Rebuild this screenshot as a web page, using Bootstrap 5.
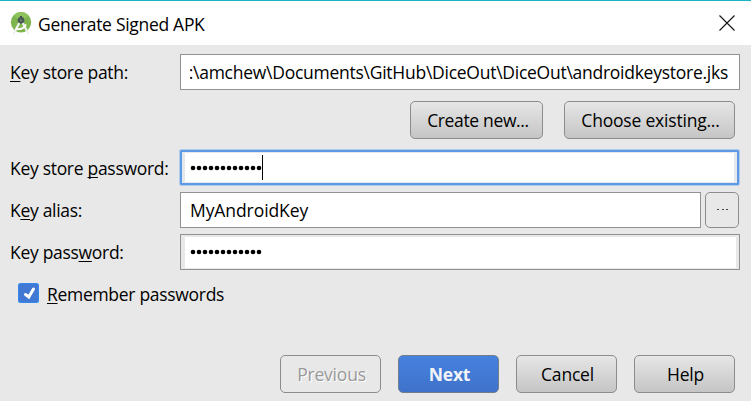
<!DOCTYPE html>
<html lang="en">
<head>
<meta charset="utf-8">
<meta name="viewport" content="width=device-width, initial-scale=1">
<title>Generate Signed APK</title>
<link href="https://cdn.jsdelivr.net/npm/bootstrap@5.3.0/dist/css/bootstrap.min.css" rel="stylesheet">
<style>
body{font-family:"Open Sans","Noto Sans",sans-serif;font-size:17.5px;line-height:24px;color:#000;background:#e8e8e8;width:751px;height:401px;overflow:hidden;letter-spacing:-.3px}
.titlebar{height:45px;border-top:1px solid #1bb4c2;padding:0 16px 0 10px}
.app-icon{width:22px;height:24px;margin-right:6px;margin-top:-1px}
.title-text{padding-top:2px}
.close-icon{margin-top:-1px}
u{text-decoration-thickness:1px;text-underline-offset:2px;text-decoration-skip-ink:none}
.form-area{padding:9px 11px 8px 10px;height:356px}
.field-label{width:170px;flex:none;white-space:nowrap}
.field-row{height:36px}
.alias-row,.key-row{margin-top:6px}
.text-field{height:36px;border:1px solid #929292;background:#fff;padding:0 9px;min-width:0;white-space:nowrap;overflow:hidden}
.path-field{letter-spacing:-.26px;padding-right:11px}
.alias-field{letter-spacing:-.08px}
.secret{box-shadow:inset 4px 2px #e8e8e8,inset -3px -1px #e8e8e8}
.secret.active{border:2px solid #5e9ae4;outline:1px solid #b0cbed;border-radius:1px;height:35px;padding:0 8px;margin-right:1px;box-shadow:inset 3px 1px #e5e8ed,inset -3px -1px #e5e8ed}
.dots{width:72px;height:6px}
.caret{width:1px;height:25px;background:#000}
.push{height:38px;border:1px solid #8c8c8c;border-radius:5px;background:linear-gradient(#e6e6e6,#c5c5c5);font-size:17.5px;line-height:24px;padding:0 0 0 2px;color:#000;letter-spacing:-.2px;white-space:nowrap}
.store-buttons{margin-top:11px;margin-bottom:11px;gap:21px;padding-right:5px}
.btn-new{width:133px;letter-spacing:-.35px;padding-left:3px}
.btn-existing{width:171px}
.footer-buttons{gap:17px;padding-right:5px}
.footer-buttons .push{width:101px}
.push.primary{background:linear-gradient(#4682df,#3f72ca);color:#f2f4f8;border-color:#737d8c;font-weight:700}
.push.off{background:#e8e8e8;color:#999;text-shadow:1px 1px #fff;opacity:1;border-color:#8c8c8c}
.push.browse{width:34px;height:36px;background:#e8e8e8;margin-left:4px;margin-right:1px}
.remember-row{margin-top:10px}
.tick{width:21px;height:20px;margin-right:8px}
.remember-text{margin-top:2px}
</style>
<script src="https://cdn.jsdelivr.net/npm/bootstrap@5.3.0/dist/js/bootstrap.bundle.min.js"></script>
</head>
<body>
<svg class="d-none"><defs><g id="mask-dots"><circle cx="3" cy="3" r="2.300"/><circle cx="9" cy="3" r="2.300"/><circle cx="15" cy="3" r="2.300"/><circle cx="21" cy="3" r="2.300"/><circle cx="27" cy="3" r="2.300"/><circle cx="33" cy="3" r="2.300"/><circle cx="39" cy="3" r="2.300"/><circle cx="45" cy="3" r="2.300"/><circle cx="51" cy="3" r="2.300"/><circle cx="57" cy="3" r="2.300"/><circle cx="63" cy="3" r="2.300"/><circle cx="69" cy="3" r="2.300"/></g></defs></svg>
<header class="titlebar bg-white d-flex align-items-center">
<svg class="app-icon" viewBox="0 0 22 24"><circle cx="11" cy="11.200" r="10.200" fill="#7fb54d"/><path d="M3.800 4a10 10 0 0 1 14.400 0L11 11z" fill="#8fc45c"/><path d="M10 5h2v3h-2z" fill="#3e4a4c"/><circle cx="11" cy="9.500" r="3.400" fill="#485a52"/><circle cx="11" cy="9.500" r="1" fill="#718678"/><path d="M9.300 12 3.500 23M12.700 12l5.800 11" stroke="#eff1ec" stroke-width="2.200" fill="none"/><path d="M5.800 17.500Q12 20 16 13.500" stroke="#fff" stroke-width="1.900" fill="none"/></svg>
<span class="title-text">Generate Signed APK</span>
<svg class="close-icon ms-auto" width="16" height="16" viewBox="0 0 16 16"><path d="M.5.5l15 15M15.500.5l-15 15" stroke="#111" stroke-width="1.100"/></svg>
</header>
<main class="form-area d-flex flex-column">
<div class="field-row d-flex align-items-center"><span class="field-label"><u>K</u>ey store path:</span><div class="text-field path-field flex-fill d-flex align-items-center"><div class="overflow-hidden d-flex justify-content-end w-100"><span>:\amchew\Documents\GitHub\DiceOut\DiceOut\androidkeystore.jks</span></div></div></div>
<div class="store-buttons d-flex justify-content-end"><button class="btn push btn-new">Create new...</button><button class="btn push btn-existing">Choose existing...</button></div>
<div class="field-row d-flex align-items-center"><span class="field-label">Key store <u>p</u>assword:</span><div class="text-field secret active flex-fill align-self-start d-flex align-items-center"><svg class="dots"><use href="#mask-dots"/></svg><span class="caret"></span></div></div>
<div class="field-row alias-row d-flex align-items-center"><span class="field-label">K<u>e</u>y alias:</span><div class="text-field alias-field flex-fill d-flex align-items-center"><span>MyAndroidKey</span></div><button class="btn push browse" aria-label="Browse"><svg class="d-block mx-auto" width="12" height="2"><path d="M0 0h2v1H0zM5 0h2v1H5zM9 0h2v1H9z" fill="#444"/></svg></button></div>
<div class="field-row key-row d-flex align-items-center"><span class="field-label">Key pass<u>w</u>ord:</span><div class="text-field secret flex-fill d-flex align-items-center"><svg class="dots"><use href="#mask-dots"/></svg></div></div>
<div class="remember-row d-flex align-items-center px-2"><svg class="tick" viewBox="0 0 21 20"><rect width="21" height="20" rx="2.500" fill="#3688ec"/><rect x="1" y="1" width="19" height="18" rx="2" fill="#4178d3"/><path d="M7.500 11.500l3.300 2.500L15.500 6" fill="none" stroke="#fff" stroke-width="3" stroke-linecap="round"/></svg><span class="remember-text"><u>R</u>emember passwords</span></div>
<div class="footer-buttons d-flex justify-content-end mt-auto"><button class="btn push off" disabled>Previous</button><button class="btn push primary">Next</button><button class="btn push">Cancel</button><button class="btn push">Help</button></div>
</main>
</body>
</html>
